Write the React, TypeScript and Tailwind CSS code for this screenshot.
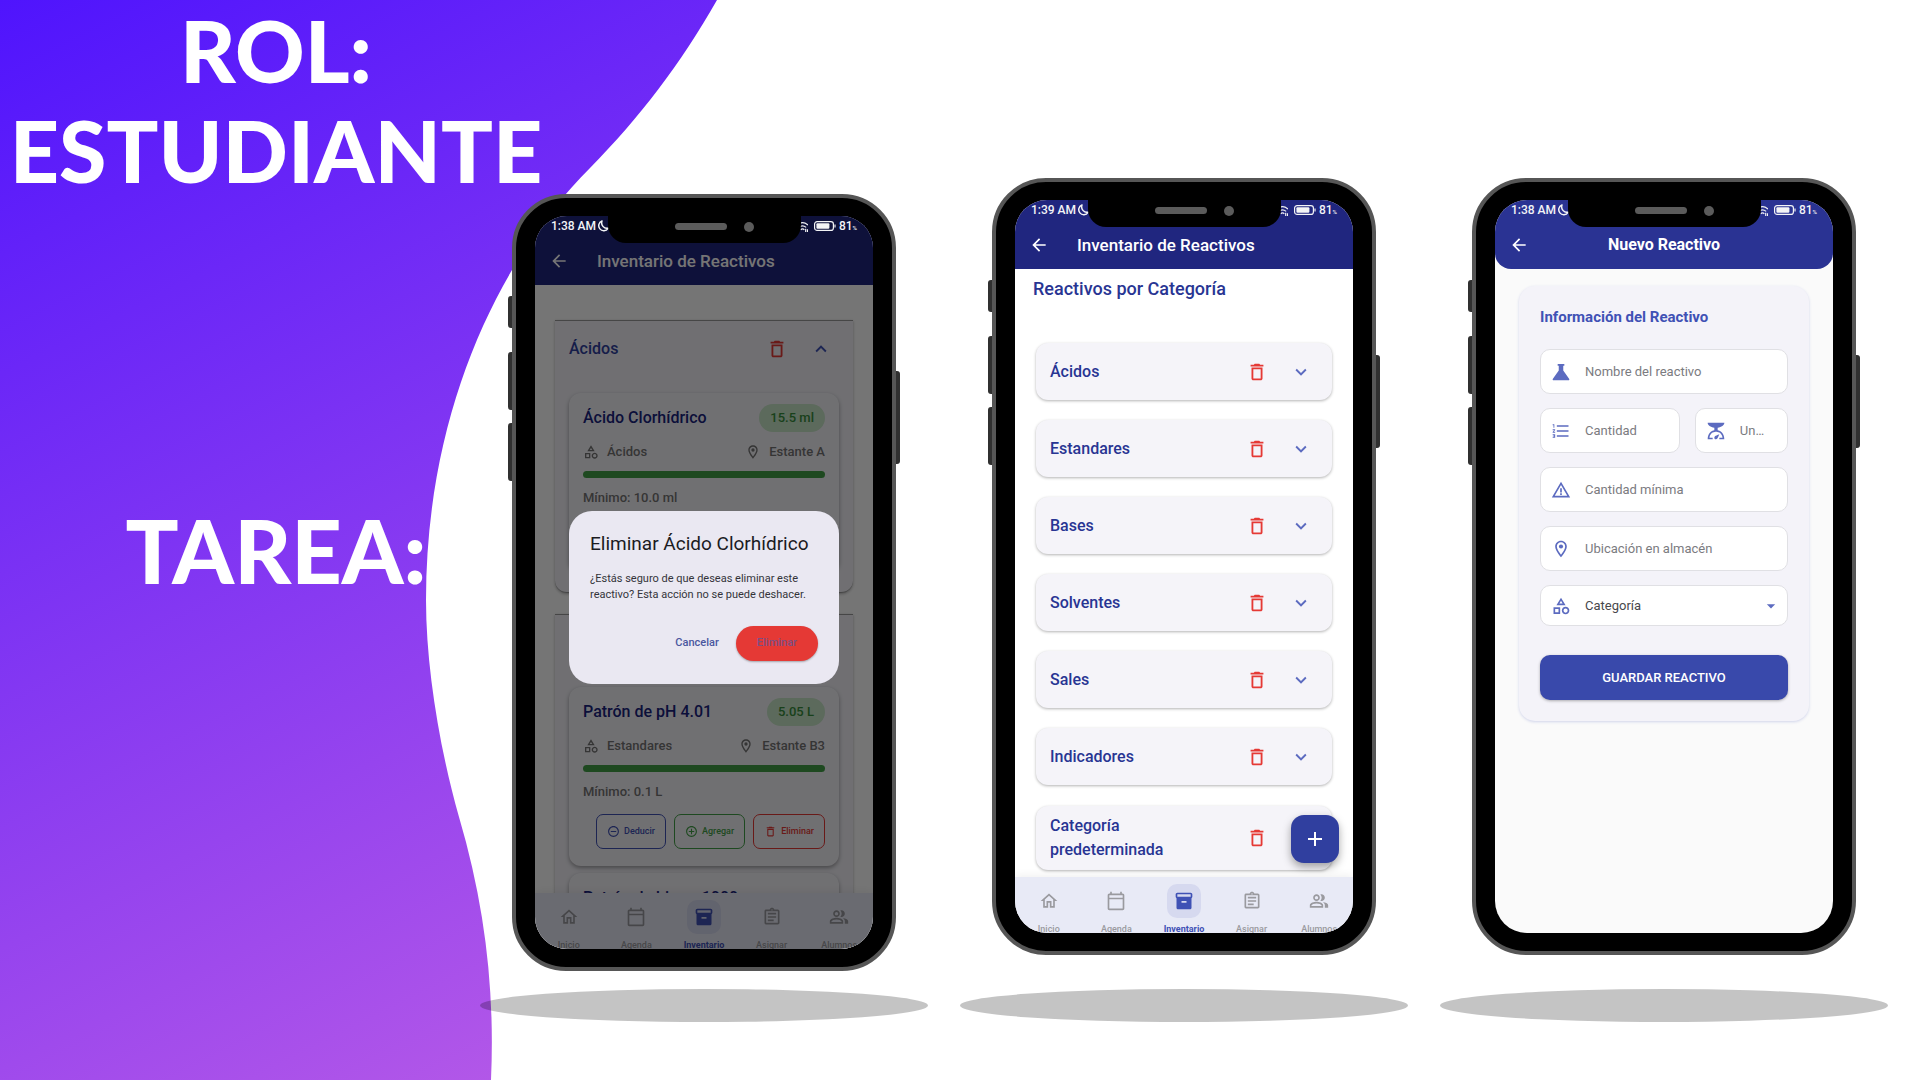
import type { ReactNode } from "react";
import type { IconType } from "react-icons";
import {
  MdAdd,
  MdAddCircleOutline,
  MdArrowBack,
  MdArrowDropDown,
  MdDeleteOutline,
  MdExpandLess,
  MdExpandMore,
  MdFormatListNumbered,
  MdInventory2,
  MdOutlineAssignment,
  MdOutlineCalendarToday,
  MdOutlineCategory,
  MdOutlineHome,
  MdOutlineLocationOn,
  MdOutlinePeopleAlt,
  MdRemoveCircleOutline,
  MdScale,
  MdWarningAmber,
} from "react-icons/md";

function Blob() {
  return (
    <svg
      className="absolute top-0 left-0 h-full w-[720px]"
      viewBox="0 0 720 1080"
      preserveAspectRatio="none"
      aria-hidden="true"
    >
      <defs>
        <linearGradient id="blob" gradientUnits="userSpaceOnUse" x1="0" y1="0" x2="530" y2="1060">
          <stop offset="0" stopColor="#4f14fd" />
          <stop offset="1" stopColor="#b257e8" />
        </linearGradient>
      </defs>
      <path
        d="M0 0H717C680 65 640 117 590 168C500 258 426 410 426 600C426 668 440 750 459 817C485 905 495 990 491 1080H0Z"
        fill="url(#blob)"
      />
    </svg>
  );
}

function StatusBar({ time }: { time: string }) {
  return (
    <div className="absolute inset-x-0 top-0 z-30 flex h-5 items-center justify-between px-4 text-xs font-medium text-gray-100">
      <span className="flex items-center gap-px">
        {time}
        <svg className="size-3" viewBox="0 0 12 12" fill="none" stroke="currentColor" strokeWidth="1.500" aria-hidden="true">
          <path d="M5 1A5 5 0 1 0 11 8.300A5.500 5.500 0 0 1 5 1Z" strokeLinejoin="round" />
        </svg>
      </span>
      <span className="flex items-center gap-[3px]">
        <svg className="mr-[3px] size-[11px]" viewBox="0 0 12 12" fill="none" stroke="currentColor" strokeWidth="1.300" aria-hidden="true">
          <path d="M0 4.500Q6 -1 12 4.500M2 7Q6 3.500 10 7M4 9.500Q6 7.500 8 9.500" />
          <path d="M9.500 8.500V12M11.500 9V12" />
        </svg>
        <svg className="h-[10px] w-[22px]" viewBox="0 0 22 10" fill="none" aria-hidden="true">
          <rect x=".6" y=".6" width="18.800" height="8.800" rx="2.500" stroke="currentColor" strokeWidth="1.200" />
          <rect x="2.400" y="2.200" width="13" height="5.600" rx="1" fill="currentColor" />
          <path d="M21 3.500V6.500" stroke="currentColor" strokeWidth="1.200" />
        </svg>
        <span>
          81<span className="text-[6px]">%</span>
        </span>
      </span>
    </div>
  );
}

function Phone({ time, gap, label, children }: { time: string; gap: string; label: string; children: ReactNode }) {
  return (
    <section aria-label={label} className="relative flex min-w-0 flex-1 flex-col items-center justify-end pb-[58px]">
      <div className="relative h-[777px] w-[384px] max-w-full">
        <div className="absolute top-[102px] -left-1 h-8 w-2 rounded-l-[3px] bg-[#303030]" />
        <div className="absolute top-[158px] -left-1 h-[58px] w-2 rounded-l-[3px] bg-[#303030]" />
        <div className="absolute top-[229px] -left-1 h-[58px] w-2 rounded-l-[3px] bg-[#303030]" />
        <div className="absolute top-[177px] -right-1 h-[93px] w-2 rounded-r-[3px] bg-[#303030]" />
        <div className="relative h-full rounded-[54px] border-4 border-[#565656] bg-black px-[19px] py-[18px]">
          <div className="relative h-full overflow-hidden rounded-[32px] bg-white">
            {children}
            <StatusBar time={time} />
            <div className="absolute top-0 left-[73px] z-40 flex h-[27px] w-[193px] items-start gap-[17px] rounded-b-[18px] bg-black pt-[7px] pl-[67px]">
              <span className="h-[7px] w-[52px] rounded-full bg-[#5b5b5b]" />
              <span className="-mt-px size-[10px] rounded-full bg-[#5b5b5b]" />
            </div>
          </div>
        </div>
      </div>
      <div className={`${gap} h-[33px] w-full rounded-[50%] bg-black/23`} />
    </section>
  );
}

function InventoryHeader() {
  return (
    <header className="flex h-[69px] shrink-0 items-center bg-[#20267f] pt-[21px] pl-[14px] text-white">
      <button type="button" aria-label="Volver" className="size-5">
        <MdArrowBack className="size-5" />
      </button>
      <h2 className="pl-7 text-[17px] leading-5 font-medium">Inventario de Reactivos</h2>
    </header>
  );
}

const tabs: { label: string; icon: IconType; active?: boolean }[] = [
  { label: "Inicio", icon: MdOutlineHome },
  { label: "Agenda", icon: MdOutlineCalendarToday },
  { label: "Inventario", icon: MdInventory2, active: true },
  { label: "Asignar", icon: MdOutlineAssignment },
  { label: "Alumnos", icon: MdOutlinePeopleAlt },
];

function BottomNav() {
  return (
    <nav className="absolute inset-x-0 bottom-0 z-10 grid h-14 grid-cols-5 bg-[#e8eaf6] shadow-[0_-2px_8px_rgba(0,0,0,0.06)]">
      {tabs.map(({ label, icon: Icon, active }) => (
        <a
          key={label}
          href="#"
          className={`flex flex-col items-center gap-1 pt-[7px] text-[9px] leading-[14px] ${
            active ? "font-bold text-[#3f51b5]" : "font-medium text-[#9a9a9f]"
          }`}
        >
          <span className={`grid size-[34px] shrink-0 place-items-center rounded-[10px] ${active ? "bg-[#d6d9ef]" : ""}`}>
            <Icon className="size-5" />
          </span>
          {label}
        </a>
      ))}
    </nav>
  );
}

function DeleteButton({ name }: { name: string }) {
  return (
    <button type="button" aria-label={`Eliminar ${name}`} className="text-[#e53935]">
      <MdDeleteOutline className="size-[22px]" />
    </button>
  );
}

function Reagent({
  name,
  amount,
  category,
  place,
  minimum,
}: {
  name: string;
  amount: string;
  category: string;
  place: string;
  minimum: string;
}) {
  return (
    <article className="rounded-xl bg-[#f5f4f9] px-3.5 pt-[11px] pb-[17px] shadow-[0_2px_4px_rgba(0,0,0,0.35)]">
      <div className="flex items-center justify-between">
        <h4 className="text-base leading-7 font-medium text-[#1a237e]">{name}</h4>
        <span className="shrink-0 rounded-full bg-[#c8e6c9] px-[11px] text-[13px] leading-7 font-medium text-[#388e3c]">
          {amount}
        </span>
      </div>
      <div className="mt-2.5 flex items-center justify-between text-[13px] leading-5 font-medium text-[#757575]">
        <span className="flex items-center gap-2">
          <MdOutlineCategory className="size-4" />
          {category}
        </span>
        <span className="flex items-center gap-2">
          <MdOutlineLocationOn className="size-4" />
          {place}
        </span>
      </div>
      <div className="mt-[9px] h-[7px] rounded-full bg-[#43a047]" role="progressbar" aria-label={`Existencias de ${name}`} />
      <p className="mt-2.5 text-[13px] leading-5 font-medium text-[#757575]">Mínimo: {minimum}</p>
      <div className="mt-3 flex h-[35px] justify-end gap-2 text-[9px] font-medium">
        <button type="button" className="flex items-center gap-1 rounded-[7px] border border-[#3f51b5] px-[10px] text-[#3f51b5]">
          <MdRemoveCircleOutline className="size-[13px]" />
          Deducir
        </button>
        <button type="button" className="flex items-center gap-1 rounded-[7px] border border-[#43a047] px-[10px] text-[#43a047]">
          <MdAddCircleOutline className="size-[13px]" />
          Agregar
        </button>
        <button type="button" className="flex items-center gap-1 rounded-[7px] border border-[#e53935] px-[10px] text-[#e53935]">
          <MdDeleteOutline className="size-[13px]" />
          Eliminar
        </button>
      </div>
    </article>
  );
}

function OpenCategory({ name, children }: { name: string; children: ReactNode }) {
  return (
    <section className="rounded-b-xl border-y border-[#9a9a9a] bg-[#f3f2f8] px-[14px] pb-5 shadow-[0_1px_3px_rgba(0,0,0,0.3)]">
      <div className="flex h-14 items-center text-[#303f9f]">
        <h3 className="flex-1 text-base font-medium">{name}</h3>
        <DeleteButton name={name} />
        <button type="button" aria-label={`Contraer ${name}`} className="mr-[7px] ml-[22px] size-[22px] text-[#3f51b5]">
          <MdExpandLess className="size-[22px]" />
        </button>
      </div>
      <div className="flex flex-col gap-[7px] pt-4">{children}</div>
    </section>
  );
}

function DeleteScreen() {
  return (
    <>
      <InventoryHeader />
      <div className="flex flex-col gap-[21px] px-5 pt-[35px]">
        <OpenCategory name="Ácidos">
          <Reagent name="Ácido Clorhídrico" amount="15.5 ml" category="Ácidos" place="Estante A" minimum="10.0 ml" />
        </OpenCategory>
        <OpenCategory name="Estandares">
          <Reagent name="Patrón de pH 4.01" amount="5.05 L" category="Estandares" place="Estante B3" minimum="0.1 L" />
          <Reagent name="Patrón de hierro 1000 ppm" amount="1.05 L" category="Estandares" place="Estante B3" minimum="0.1 L" />
        </OpenCategory>
      </div>
      <BottomNav />
      <div className="absolute inset-0 z-20 flex items-center justify-center bg-black/54 px-[34px] pt-[30px]">
        <div role="alertdialog" aria-labelledby="dialog-title" className="w-full rounded-[23px] bg-[#eae8f2] p-[21px] pb-[23px]">
          <h2 id="dialog-title" className="text-[19px] leading-6 whitespace-nowrap text-[#1b1b1f]">
            Eliminar Ácido Clorhídrico
          </h2>
          <p className="mt-[15px] text-[11px] leading-4 whitespace-pre-line text-[#34343a]">
            {"¿Estás seguro de que deseas eliminar este\nreactivo? Esta acción no se puede deshacer."}
          </p>
          <div className="mt-[23px] flex items-center justify-end gap-[17px] text-[11px] font-medium text-[#4a579f]">
            <button type="button">Cancelar</button>
            <button type="button" className="h-[35px] rounded-full bg-[#e53935] px-[21px] text-[#7c4f84] shadow-[0_1px_2px_rgba(0,0,0,0.3)]">
              Eliminar
            </button>
          </div>
        </div>
      </div>
    </>
  );
}

const categories = ["Ácidos", "Estandares", "Bases", "Solventes", "Sales", "Indicadores", "Categoría predeterminada"];

function CategoriesScreen() {
  return (
    <>
      <InventoryHeader />
      <div className="px-[21px] pt-2.5">
        <h3 className="-ml-[3px] text-lg leading-5 font-medium text-[#283593]">Reactivos por Categoría</h3>
        <ul className="mt-11 flex flex-col gap-5">
          {categories.map((name) => (
            <li
              key={name}
              className="flex min-h-[57px] items-center rounded-xl bg-[#f5f4f9] py-2 pl-[14px] text-[#283593] shadow-[0_1px_3px_rgba(0,0,0,0.3)] last:mt-px"
            >
              <span className="w-[140px] text-base leading-6 font-medium">{name}</span>
              <span className="flex flex-1 items-center justify-end gap-[22px] pr-5">
                <DeleteButton name={name} />
                <button type="button" aria-label={`Expandir ${name}`} className="text-[#5c6bc0]">
                  <MdExpandMore className="size-[22px]" />
                </button>
              </span>
            </li>
          ))}
        </ul>
      </div>
      <button
        type="button"
        aria-label="Agregar reactivo"
        className="absolute right-3.5 bottom-[70px] z-20 grid size-12 place-items-center rounded-[13px] bg-[#303f9f] text-white shadow-[0_4px_8px_rgba(0,0,0,0.35)]"
      >
        <MdAdd className="size-6" />
      </button>
      <BottomNav />
    </>
  );
}

function Field({ id, label, icon: Icon }: { id: string; label: string; icon: IconType }) {
  return (
    <div className="flex h-[45px] items-center gap-[14px] rounded-[10px] border border-[#e0e0e4] bg-white pr-5 pl-[10px]">
      <Icon className="size-5 shrink-0 text-[#5c6bc0]" />
      <label htmlFor={id} className="sr-only">
        {label}
      </label>
      <input
        id={id}
        type="text"
        placeholder={label}
        className="w-full min-w-0 bg-transparent text-[13px] text-ellipsis outline-none placeholder:text-[#7b7b7f]"
      />
    </div>
  );
}

function Flask(props: { className?: string }) {
  return (
    <svg className={props.className} viewBox="0 0 24 24" fill="currentColor" aria-hidden="true">
      <path d="M8 2.500h8v2h-1.300v5.800l7 9.900c.7 1 .2 1.800-.8 1.800H3.100c-1 0-1.500-.8-.8-1.800l7-9.900V4.500H8z" />
    </svg>
  );
}

function NewReagentScreen() {
  return (
    <div className="h-full bg-[#fafafa]">
      <header className="relative flex h-[69px] items-center justify-center rounded-b-[16px] bg-[#2a3393] pt-[21px] text-white">
        <button type="button" aria-label="Volver" className="absolute left-[14px] size-5">
          <MdArrowBack className="size-5" />
        </button>
        <h2 className="text-base leading-5 font-bold">Nuevo Reactivo</h2>
      </header>
      <form className="mx-6 mt-[17px] flex flex-col gap-[14px] rounded-[16px] bg-[#f4f3f9] px-[21px] pt-[21px] pb-[21px] shadow-[0_1px_3px_rgba(63,81,181,0.22)]">
        <h3 className="mb-2 text-[15px] leading-5 font-bold text-[#3f51b5]">Información del Reactivo</h3>
        <Field id="nombre" label="Nombre del reactivo" icon={Flask as IconType} />
        <div className="grid grid-cols-[3fr_2fr] gap-[15px]">
          <Field id="cantidad" label="Cantidad" icon={MdFormatListNumbered} />
          <Field id="unidad" label="Unidad" icon={MdScale} />
        </div>
        <Field id="minima" label="Cantidad mínima" icon={MdWarningAmber} />
        <Field id="ubicacion" label="Ubicación en almacén" icon={MdOutlineLocationOn} />
        <div className="relative flex h-[41px] items-center rounded-[10px] border border-[#e0e0e4] bg-white pl-[10px] text-[#5c6bc0]">
          <MdOutlineCategory className="size-5 shrink-0" />
          <select
            aria-label="Categoría"
            className="h-full w-full appearance-none bg-transparent pl-[14px] text-[13px] text-[#48484c] outline-none"
          >
            <option>Categoría</option>
          </select>
          <MdArrowDropDown className="pointer-events-none absolute right-1.5 size-5" />
        </div>
        <button
          type="button"
          className="mt-[15px] h-[45px] rounded-[10px] bg-[#3949ab] text-[13px] font-medium text-white shadow-[0_1px_3px_rgba(0,0,0,0.3)]"
        >
          GUARDAR REACTIVO
        </button>
      </form>
    </div>
  );
}

export default function App() {
  return (
    <main className="relative flex min-h-screen overflow-hidden bg-white font-['Roboto',sans-serif]">
      <Blob />
      <div className="relative -mr-[72px] w-[552px] shrink-0 text-center font-['Lato',sans-serif] font-black text-white">
        <h1 className="text-[86px] leading-[100px]">
          ROL:
          <br />
          ESTUDIANTE
        </h1>
        <p className="mt-[300px] text-[88px] leading-[100px]">TAREA:</p>
      </div>
      <div className="flex min-w-0 flex-1 gap-8 pr-8">
        <Phone label="Eliminar reactivo" time="1:38 AM" gap="mt-[18px]">
          <DeleteScreen />
        </Phone>
        <Phone label="Inventario por categoría" time="1:39 AM" gap="mt-[34px]">
          <CategoriesScreen />
        </Phone>
        <Phone label="Nuevo reactivo" time="1:38 AM" gap="mt-[34px]">
          <NewReagentScreen />
        </Phone>
      </div>
    </main>
  );
}
